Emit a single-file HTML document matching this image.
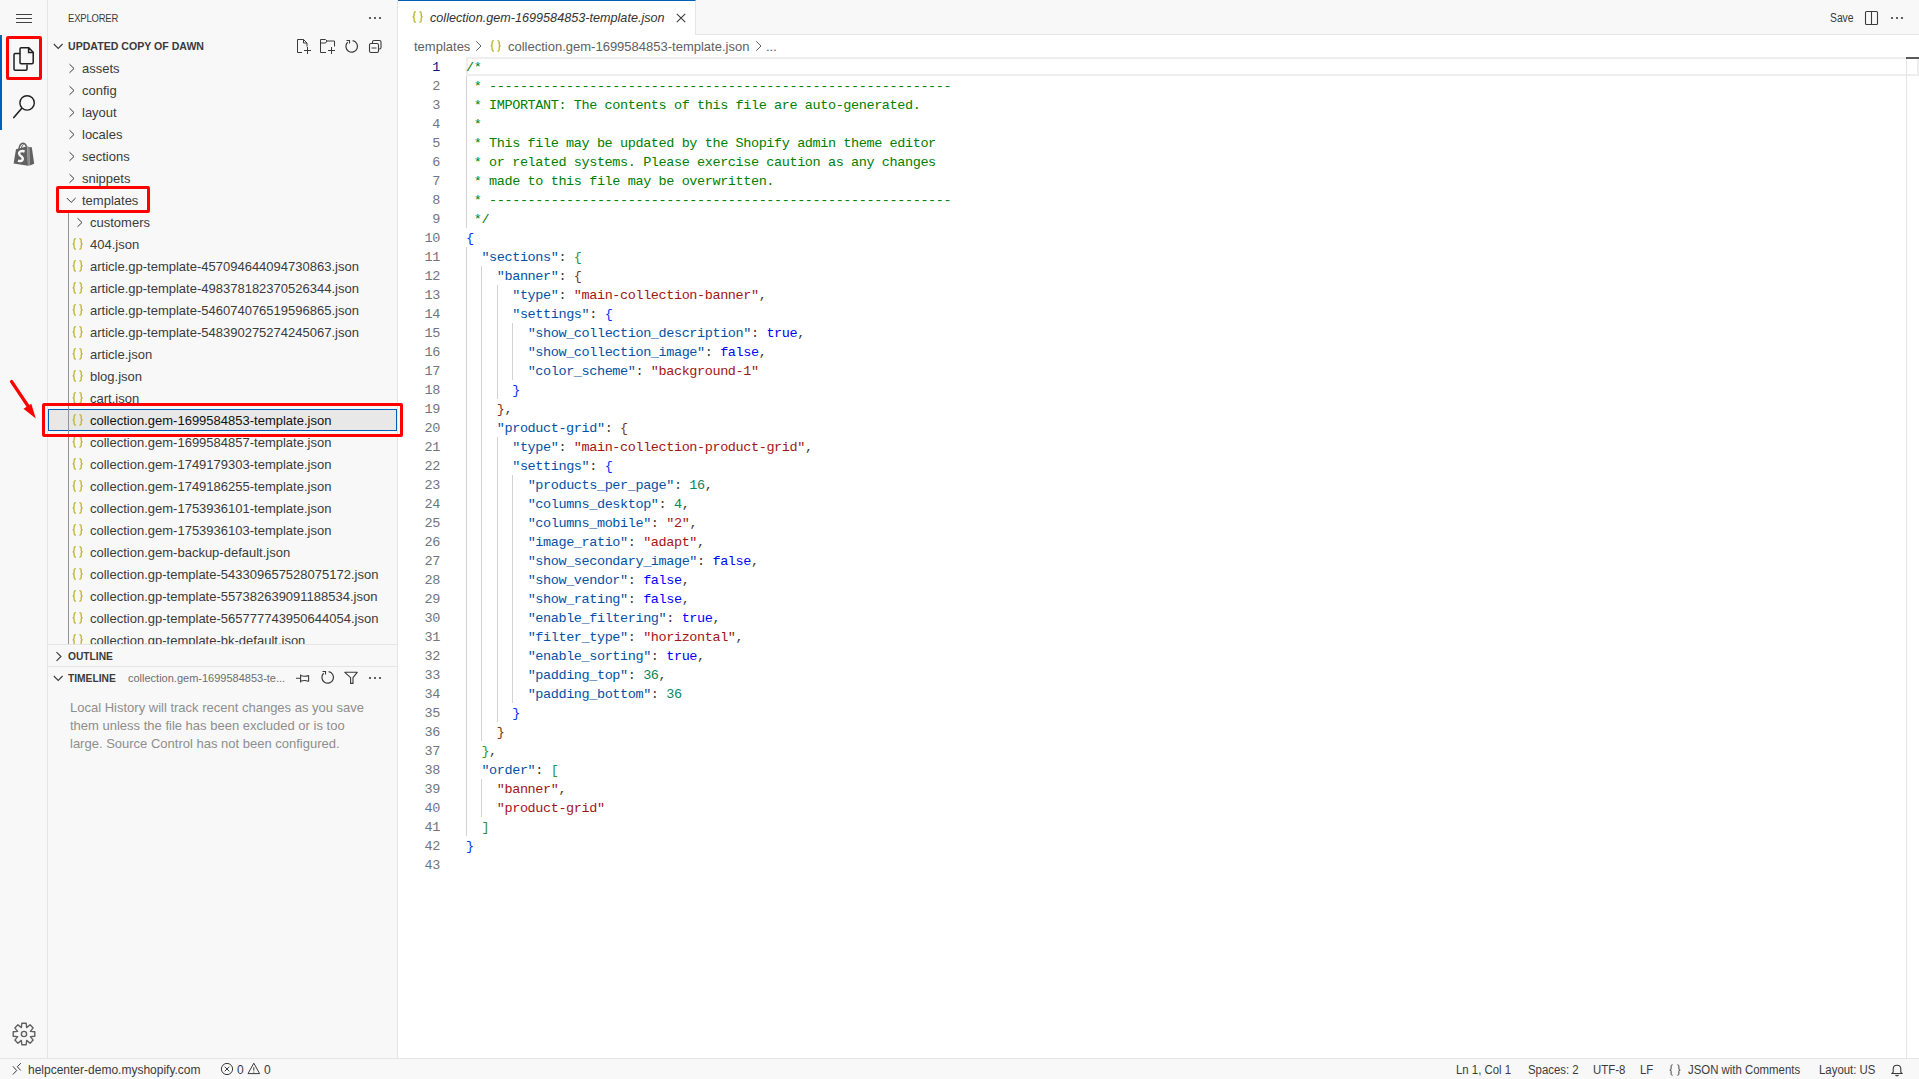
<!DOCTYPE html>
<html><head><meta charset="utf-8">
<style>
*{box-sizing:border-box;margin:0;padding:0}
html,body{width:1919px;height:1079px;overflow:hidden}
body{background:#f8f8f8;font-family:"Liberation Sans",sans-serif;position:relative;color:#3b3b3b;font-size:13px}
.a{position:absolute}
svg{position:absolute;overflow:visible}
#act{left:0;top:0;width:48px;height:1058px;background:#f8f8f8;border-right:1px solid #e5e5e5}
#side{left:48px;top:0;width:350px;height:1058px;background:#f8f8f8;border-right:1px solid #e5e5e5;overflow:hidden}
#editor{left:398px;top:0;width:1521px;height:1058px;background:#fff;overflow:hidden}
#status{left:0;top:1058px;width:1919px;height:21px;border-top:1px solid #e5e5e5;background:#f8f8f8;font-size:12px}
.row{position:absolute;left:0;width:349px;height:22px;line-height:22px;white-space:nowrap;color:#3b3b3b}
.row .t{position:absolute;top:1px}
.hdr{font-weight:bold;font-size:11px}
.code{font-family:"Liberation Mono",monospace;font-size:13.5px;letter-spacing:-0.4px}
.ln{position:absolute;left:0;width:42px;text-align:right;height:19px;line-height:21px}
.cl{position:absolute;left:68px;height:19px;line-height:21px;white-space:pre}
.c{color:#008000}.k{color:#0451a5}.s{color:#a31515}.b{color:#0000ff}.n{color:#098658}
.p0{color:#0431fa}.p1{color:#319331}.p2{color:#7b3814}
.st{position:absolute;top:0;height:21px;line-height:23px;white-space:nowrap}
.sel{background:#e8e8e8;border:1px solid #005fb8}
.sel .t{top:0px;margin-left:-1px;color:#111}.sel svg{margin-top:-1px;margin-left:-1px}
.red{position:absolute;border:3px solid #ff0000;border-radius:2px}
</style></head><body>
<!-- ACTIVITY BAR -->
<div id="act" class="a">
<svg style="left:0;top:0" width="48" height="48"><path d="M16 14.5 H32 M16 18.5 H32 M16 22.5 H32" stroke="#424242" stroke-width="1"/></svg>
<div class="a" style="left:0;top:35px;width:2px;height:95px;background:#005fb8"></div>
<svg style="left:0;top:0" width="48" height="80"><path d="M20.2 53.5 H15.2 Q14 53.5 14 54.7 V69 Q14 70.2 15.2 70.2 H25.8 Q27 70.2 27 69 V64.5" fill="none" stroke="#1f1f1f" stroke-width="1.5"/><path d="M21.2 47.8 H28.8 L33.2 52.2 V62.5 Q33.2 63.7 32 63.7 H21.2 Q20 63.7 20 62.5 V49 Q20 47.8 21.2 47.8 Z M28.6 47.8 V52.4 H33.2" fill="none" stroke="#1f1f1f" stroke-width="1.5"/></svg>
<svg style="left:0;top:0" width="48" height="130"><circle cx="27.1" cy="102.9" r="7.2" fill="none" stroke="#1f1f1f" stroke-width="1.4"/><path d="M21.6 108.6 L13.8 117.6" stroke="#1f1f1f" stroke-width="1.6" stroke-linecap="round"/></svg>
<svg style="left:0;top:0" width="48" height="170"><path d="M18.9 149.2 C19.4 145.5 21 143.3 23 143.2 C24.6 143.2 25.8 144.5 26.6 146.8" fill="none" stroke="#616161" stroke-width="1.5"/><path d="M21.3 148.5 C21.8 146.2 22.6 144.9 23.6 144.6" fill="none" stroke="#616161" stroke-width="1"/><path d="M16 149.3 L27.3 146.3 L28 165.8 L13.6 163.4 Z" fill="#616161"/><path d="M27.3 146.3 L29.2 147 L29.9 165.5 L28 165.8 Z" fill="#8c8c8c"/><path d="M29.2 147 L31.8 147.2 L34.2 163.8 L29.9 165.5 Z" fill="#616161"/><path d="M24.6 151.6 Q22.5 150.6 20.6 151.3 Q18.4 152.4 19.5 154.6 Q20.3 155.8 21.8 156.8 Q23.4 158.2 22.5 160 Q21.2 161.8 18 160.6" fill="none" stroke="#f8f8f8" stroke-width="2.4"/></svg>
<svg style="left:0;top:0" width="48" height="1058"><g transform="translate(24 1034)" fill="none" stroke="#616161" stroke-width="1.4" stroke-linejoin="round"><path d="M-2.19 -10.78 L2.19 -10.78 L2.64 -6.37 L6.07 -9.17 L9.17 -6.07 L6.37 -2.64 L10.78 -2.19 L10.78 2.19 L6.37 2.64 L9.17 6.07 L6.07 9.17 L2.64 6.37 L2.19 10.78 L-2.19 10.78 L-2.64 6.37 L-6.07 9.17 L-9.17 6.07 L-6.37 2.64 L-10.78 2.19 L-10.78 -2.19 L-6.37 -2.64 L-9.17 -6.07 L-6.07 -9.17 L-2.64 -6.37 Z"/><circle cx="0" cy="0" r="2.6"/></g></svg>
</div>
<!-- SIDEBAR -->
<div id="side" class="a">
<svg width="0" height="0" style="position:absolute"><defs>
<g id="json"><path d="M3.9 0.6 Q2.1 0.6 2.1 2.3 V4.5 Q2.1 5.8 0.6 5.8 Q2.1 5.8 2.1 7.1 V9.5 Q2.1 11.2 3.9 11.2 M7.4 0.6 Q9.2 0.6 9.2 2.3 V4.5 Q9.2 5.8 10.7 5.8 Q9.2 5.8 9.2 7.1 V9.5 Q9.2 11.2 7.4 11.2" fill="none" stroke="#bcb92c" stroke-width="1.35"/></g>
</defs></svg>
<div class="a" style="left:20px;top:0;height:35px;line-height:36px;font-size:11px;letter-spacing:-0.2px"><span style="display:inline-block;transform:scaleX(0.86);transform-origin:0 50%">EXPLORER</span></div>
<svg style="left:320px;top:16px" width="14" height="4"><circle cx="2" cy="2" r="1.1" fill="#3b3b3b"/><circle cx="7" cy="2" r="1.1" fill="#3b3b3b"/><circle cx="12" cy="2" r="1.1" fill="#3b3b3b"/></svg>
<!-- section header -->
<div class="a" style="left:0;top:35px;width:349px;height:22px">
<svg style="left:5px;top:8px" width="11" height="7"><path d="M0.8 1 L5.2 5.4 L9.6 1" fill="none" stroke="#3b3b3b" stroke-width="1.1"/></svg>
<div class="a hdr" style="left:20px;top:0;line-height:22px;color:#3b3b3b;white-space:nowrap"><span style="display:inline-block;transform:scaleX(0.962);transform-origin:0 50%">UPDATED COPY OF DAWN</span></div>
<!-- toolbar icons -->
<svg style="left:249px;top:4px" width="16" height="16"><path d="M0.5 13.5 V0.5 H6.5 L10 4 V7.5 M6.5 0.5 V4 H10 M0.5 13.5 H5 M10.5 8 V15 M7 11.5 H14" fill="none" stroke="#3b3b3b" stroke-width="1"/></svg>
<svg style="left:272px;top:4px" width="16" height="16"><path d="M0.5 13.5 V0.5 H5.5 L7 2 H14.5 V7.5 M0.5 4 H5.5 L7 2 M0.5 13.5 H6 M11.5 8 V15 M8 11.5 H15" fill="none" stroke="#3b3b3b" stroke-width="1"/></svg>
<svg style="left:296px;top:4px" width="16" height="16"><path d="M3.6 3.2 A5.8 5.8 0 1 0 8.6 1.6" fill="none" stroke="#3b3b3b" stroke-width="1.2"/><path d="M2.5 1.5 H5.5 V4.5" fill="none" stroke="#3b3b3b" stroke-width="1.1"/></svg>
<svg style="left:320px;top:4px" width="16" height="16"><path d="M4.5 4.5 V3 Q4.5 1.5 6 1.5 H11.5 Q13 1.5 13 3 V8.5 Q13 10 11.5 10 H10.5 M1.5 6 Q1.5 4.5 3 4.5 H9 Q10.5 4.5 10.5 6 V12 Q10.5 13.5 9 13.5 H3 Q1.5 13.5 1.5 12 Z M3.5 9 H8.5" fill="none" stroke="#3b3b3b" stroke-width="1.1"/></svg>
</div>
<!-- tree -->
<div class="a" style="left:0;top:57px;width:349px;height:587px;overflow:hidden">
<div class="row" style="top:0px"><svg class="chev" style="left:20px;top:6px" width="8" height="11"><path d="M1.5 1.2 L6 5.5 L1.5 9.8" fill="none" stroke="#3b3b3b" stroke-width="1"/></svg><span class="t" style="left:34px">assets</span></div>
<div class="row" style="top:22px"><svg class="chev" style="left:20px;top:6px" width="8" height="11"><path d="M1.5 1.2 L6 5.5 L1.5 9.8" fill="none" stroke="#3b3b3b" stroke-width="1"/></svg><span class="t" style="left:34px">config</span></div>
<div class="row" style="top:44px"><svg class="chev" style="left:20px;top:6px" width="8" height="11"><path d="M1.5 1.2 L6 5.5 L1.5 9.8" fill="none" stroke="#3b3b3b" stroke-width="1"/></svg><span class="t" style="left:34px">layout</span></div>
<div class="row" style="top:66px"><svg class="chev" style="left:20px;top:6px" width="8" height="11"><path d="M1.5 1.2 L6 5.5 L1.5 9.8" fill="none" stroke="#3b3b3b" stroke-width="1"/></svg><span class="t" style="left:34px">locales</span></div>
<div class="row" style="top:88px"><svg class="chev" style="left:20px;top:6px" width="8" height="11"><path d="M1.5 1.2 L6 5.5 L1.5 9.8" fill="none" stroke="#3b3b3b" stroke-width="1"/></svg><span class="t" style="left:34px">sections</span></div>
<div class="row" style="top:110px"><svg class="chev" style="left:20px;top:6px" width="8" height="11"><path d="M1.5 1.2 L6 5.5 L1.5 9.8" fill="none" stroke="#3b3b3b" stroke-width="1"/></svg><span class="t" style="left:34px">snippets</span></div>
<div class="row" style="top:132px"><svg class="chev" style="left:18px;top:8px" width="11" height="7"><path d="M0.8 1 L5.2 5.4 L9.6 1" fill="none" stroke="#3b3b3b" stroke-width="1"/></svg><span class="t" style="left:34px">templates</span></div>
<div class="row" style="top:154px"><svg class="chev" style="left:28px;top:6px" width="8" height="11"><path d="M1.5 1.2 L6 5.5 L1.5 9.8" fill="none" stroke="#3b3b3b" stroke-width="1"/></svg><span class="t" style="left:42px">customers</span></div>
<div class="row" style="top:176px"><svg style="left:24px;top:5px" width="12" height="12"><use href="#json"/></svg><span class="t" style="left:42px">404.json</span></div>
<div class="row" style="top:198px"><svg style="left:24px;top:5px" width="12" height="12"><use href="#json"/></svg><span class="t" style="left:42px">article.gp-template-457094644094730863.json</span></div>
<div class="row" style="top:220px"><svg style="left:24px;top:5px" width="12" height="12"><use href="#json"/></svg><span class="t" style="left:42px">article.gp-template-498378182370526344.json</span></div>
<div class="row" style="top:242px"><svg style="left:24px;top:5px" width="12" height="12"><use href="#json"/></svg><span class="t" style="left:42px">article.gp-template-546074076519596865.json</span></div>
<div class="row" style="top:264px"><svg style="left:24px;top:5px" width="12" height="12"><use href="#json"/></svg><span class="t" style="left:42px">article.gp-template-548390275274245067.json</span></div>
<div class="row" style="top:286px"><svg style="left:24px;top:5px" width="12" height="12"><use href="#json"/></svg><span class="t" style="left:42px">article.json</span></div>
<div class="row" style="top:308px"><svg style="left:24px;top:5px" width="12" height="12"><use href="#json"/></svg><span class="t" style="left:42px">blog.json</span></div>
<div class="row" style="top:330px"><svg style="left:24px;top:5px" width="12" height="12"><use href="#json"/></svg><span class="t" style="left:42px">cart.json</span></div>
<div class="row sel" style="top:352px"><svg style="left:24px;top:5px" width="12" height="12"><use href="#json"/></svg><span class="t" style="left:42px">collection.gem-1699584853-template.json</span></div>
<div class="row" style="top:374px"><svg style="left:24px;top:5px" width="12" height="12"><use href="#json"/></svg><span class="t" style="left:42px">collection.gem-1699584857-template.json</span></div>
<div class="row" style="top:396px"><svg style="left:24px;top:5px" width="12" height="12"><use href="#json"/></svg><span class="t" style="left:42px">collection.gem-1749179303-template.json</span></div>
<div class="row" style="top:418px"><svg style="left:24px;top:5px" width="12" height="12"><use href="#json"/></svg><span class="t" style="left:42px">collection.gem-1749186255-template.json</span></div>
<div class="row" style="top:440px"><svg style="left:24px;top:5px" width="12" height="12"><use href="#json"/></svg><span class="t" style="left:42px">collection.gem-1753936101-template.json</span></div>
<div class="row" style="top:462px"><svg style="left:24px;top:5px" width="12" height="12"><use href="#json"/></svg><span class="t" style="left:42px">collection.gem-1753936103-template.json</span></div>
<div class="row" style="top:484px"><svg style="left:24px;top:5px" width="12" height="12"><use href="#json"/></svg><span class="t" style="left:42px">collection.gem-backup-default.json</span></div>
<div class="row" style="top:506px"><svg style="left:24px;top:5px" width="12" height="12"><use href="#json"/></svg><span class="t" style="left:42px">collection.gp-template-543309657528075172.json</span></div>
<div class="row" style="top:528px"><svg style="left:24px;top:5px" width="12" height="12"><use href="#json"/></svg><span class="t" style="left:42px">collection.gp-template-557382639091188534.json</span></div>
<div class="row" style="top:550px"><svg style="left:24px;top:5px" width="12" height="12"><use href="#json"/></svg><span class="t" style="left:42px">collection.gp-template-565777743950644054.json</span></div>
<div class="row" style="top:572px"><svg style="left:24px;top:5px" width="12" height="12"><use href="#json"/></svg><span class="t" style="left:42px">collection.gp-template-bk-default.json</span></div>
<div class="a" style="left:20px;top:154px;width:1px;height:440px;background:#939393"></div>
</div>
<!-- outline / timeline -->
<div class="a" style="left:0;top:644px;width:349px;height:1px;background:#e5e5e5"></div>
<div class="a" style="left:0;top:645px;width:349px;height:21px">
<svg style="left:7px;top:6px" width="8" height="11"><path d="M1.5 1.2 L6 5.5 L1.5 9.8" fill="none" stroke="#3b3b3b" stroke-width="1.1"/></svg>
<div class="a hdr" style="left:20px;top:0;line-height:22px"><span style="display:inline-block;transform:scaleX(0.93);transform-origin:0 50%">OUTLINE</span></div>
</div>
<div class="a" style="left:0;top:666px;width:349px;height:1px;background:#e5e5e5"></div>
<div class="a" style="left:0;top:667px;width:349px;height:22px">
<svg style="left:5px;top:8px" width="11" height="7"><path d="M0.8 1 L5.2 5.4 L9.6 1" fill="none" stroke="#3b3b3b" stroke-width="1.1"/></svg>
<div class="a hdr" style="left:20px;top:0;line-height:22px"><span style="display:inline-block;transform:scaleX(0.93);transform-origin:0 50%">TIMELINE</span></div>
<div class="a" style="left:80px;top:0;line-height:22px;font-size:11px;color:#6e6e6e;white-space:nowrap">collection.gem-1699584853-te...</div>
<svg style="left:247px;top:3px" width="16" height="16"><path d="M1 8.2 H5.6 M5.6 4.4 V12.4 M5.6 5.6 Q9.6 7 13.6 5.4 M5.6 11.2 Q9.6 9.8 13.6 11.4 M13.6 5.2 V11.6" fill="none" stroke="#3b3b3b" stroke-width="1.1"/></svg>
<svg style="left:272px;top:3px" width="16" height="16"><path d="M3.6 3.2 A5.8 5.8 0 1 0 8.6 1.6" fill="none" stroke="#3b3b3b" stroke-width="1.2"/><path d="M2.5 1.5 H5.5 V4.5" fill="none" stroke="#3b3b3b" stroke-width="1.1"/></svg>
<svg style="left:296px;top:3px" width="16" height="16"><path d="M0.8 2.3 H13.2 L9 7.6 V13.4 H6.6 V7.6 Z" fill="none" stroke="#3b3b3b" stroke-width="1.1" stroke-linejoin="round"/></svg>
<svg style="left:320px;top:9px" width="14" height="4"><circle cx="2" cy="2" r="1.1" fill="#3b3b3b"/><circle cx="7" cy="2" r="1.1" fill="#3b3b3b"/><circle cx="12" cy="2" r="1.1" fill="#3b3b3b"/></svg>
</div>
<div class="a" style="left:22px;top:699px;width:300px;line-height:18px;font-size:13px;color:#8e8e8e">Local History will track recent changes as you save them unless the file has been excluded or is too large. Source Control has not been configured.</div>
</div>
<!-- EDITOR -->
<div id="editor" class="a">
<!-- tab bar -->
<div class="a" style="left:0;top:0;width:1521px;height:35px;background:#f8f8f8;border-bottom:1px solid #e5e5e5"></div>
<div class="a" style="left:0;top:0;width:298px;height:35px;background:#fff;border-top:1px solid #005fb8;border-right:1px solid #e5e5e5"></div>
<svg style="left:14px;top:11px" width="12" height="12"><use href="#json"/></svg>
<div class="a" style="left:32px;top:0;height:35px;line-height:35px;font-style:italic;color:#333;white-space:nowrap"><span style="display:inline-block;transform:scaleX(0.972);transform-origin:0 50%">collection.gem-1699584853-template.json</span></div>
<svg style="left:278px;top:13px" width="10" height="10"><path d="M0.8 0.8 L9.2 9.2 M9.2 0.8 L0.8 9.2" fill="none" stroke="#3b3b3b" stroke-width="1.1"/></svg>
<div class="a" style="left:1432px;top:0;height:35px;line-height:36px;font-size:12px;color:#3b3b3b"><span style="display:inline-block;transform:scaleX(0.86);transform-origin:0 50%">Save</span></div>
<svg style="left:1466px;top:10px" width="16" height="16"><rect x="1.5" y="1.5" width="12" height="13" rx="1" fill="none" stroke="#3b3b3b" stroke-width="1.1"/><path d="M7.5 1.5 V14.5" stroke="#3b3b3b" stroke-width="1.1"/></svg>
<svg style="left:1492px;top:16px" width="14" height="4"><circle cx="2" cy="2" r="1.1" fill="#3b3b3b"/><circle cx="7" cy="2" r="1.1" fill="#3b3b3b"/><circle cx="12" cy="2" r="1.1" fill="#3b3b3b"/></svg>
<!-- breadcrumbs -->
<div class="a" style="left:16px;top:36px;height:22px;line-height:22px;color:#616161;white-space:nowrap">templates</div>
<svg style="left:77px;top:40px" width="8" height="12"><path d="M1.2 1.2 L6 6 L1.2 10.8" fill="none" stroke="#616161" stroke-width="1"/></svg>
<svg style="left:92px;top:40px" width="12" height="12"><use href="#json"/></svg>
<div class="a" style="left:110px;top:36px;height:22px;line-height:22px;color:#616161;white-space:nowrap">collection.gem-1699584853-template.json</div>
<svg style="left:357px;top:40px" width="8" height="12"><path d="M1.2 1.2 L6 6 L1.2 10.8" fill="none" stroke="#616161" stroke-width="1"/></svg>
<div class="a" style="left:368px;top:36px;height:22px;line-height:22px;color:#616161">...</div>
<!-- line highlight -->
<div class="a" style="left:68px;top:57px;width:1453px;height:19px;border:2px solid #eeeeee"></div>
<!-- overview ruler -->
<div class="a" style="left:1508px;top:57px;width:1px;height:1001px;background:#e5e5e5"></div>
<div class="a" style="left:1508px;top:57px;width:13px;height:2px;background:#5a5a5a"></div>
<!-- code -->
<div class="a code" style="left:0;top:57px;width:1500px;height:1001px">
<div class="a" style="left:68px;top:19px;width:1px;height:152px;background:#d3d3d3"></div>
<div class="a" style="left:68px;top:190px;width:1px;height:589px;background:#d3d3d3"></div>
<div class="a" style="left:83px;top:209px;width:1px;height:475px;background:#d3d3d3"></div>
<div class="a" style="left:83px;top:722px;width:1px;height:38px;background:#d3d3d3"></div>
<div class="a" style="left:99px;top:228px;width:1px;height:114px;background:#d3d3d3"></div>
<div class="a" style="left:99px;top:380px;width:1px;height:285px;background:#d3d3d3"></div>
<div class="a" style="left:114px;top:266px;width:1px;height:57px;background:#d3d3d3"></div>
<div class="a" style="left:114px;top:418px;width:1px;height:228px;background:#d3d3d3"></div>
<div class="ln" style="top:0px;color:#171184">1</div>
<div class="ln" style="top:19px;color:#6e7681">2</div>
<div class="ln" style="top:38px;color:#6e7681">3</div>
<div class="ln" style="top:57px;color:#6e7681">4</div>
<div class="ln" style="top:76px;color:#6e7681">5</div>
<div class="ln" style="top:95px;color:#6e7681">6</div>
<div class="ln" style="top:114px;color:#6e7681">7</div>
<div class="ln" style="top:133px;color:#6e7681">8</div>
<div class="ln" style="top:152px;color:#6e7681">9</div>
<div class="ln" style="top:171px;color:#6e7681">10</div>
<div class="ln" style="top:190px;color:#6e7681">11</div>
<div class="ln" style="top:209px;color:#6e7681">12</div>
<div class="ln" style="top:228px;color:#6e7681">13</div>
<div class="ln" style="top:247px;color:#6e7681">14</div>
<div class="ln" style="top:266px;color:#6e7681">15</div>
<div class="ln" style="top:285px;color:#6e7681">16</div>
<div class="ln" style="top:304px;color:#6e7681">17</div>
<div class="ln" style="top:323px;color:#6e7681">18</div>
<div class="ln" style="top:342px;color:#6e7681">19</div>
<div class="ln" style="top:361px;color:#6e7681">20</div>
<div class="ln" style="top:380px;color:#6e7681">21</div>
<div class="ln" style="top:399px;color:#6e7681">22</div>
<div class="ln" style="top:418px;color:#6e7681">23</div>
<div class="ln" style="top:437px;color:#6e7681">24</div>
<div class="ln" style="top:456px;color:#6e7681">25</div>
<div class="ln" style="top:475px;color:#6e7681">26</div>
<div class="ln" style="top:494px;color:#6e7681">27</div>
<div class="ln" style="top:513px;color:#6e7681">28</div>
<div class="ln" style="top:532px;color:#6e7681">29</div>
<div class="ln" style="top:551px;color:#6e7681">30</div>
<div class="ln" style="top:570px;color:#6e7681">31</div>
<div class="ln" style="top:589px;color:#6e7681">32</div>
<div class="ln" style="top:608px;color:#6e7681">33</div>
<div class="ln" style="top:627px;color:#6e7681">34</div>
<div class="ln" style="top:646px;color:#6e7681">35</div>
<div class="ln" style="top:665px;color:#6e7681">36</div>
<div class="ln" style="top:684px;color:#6e7681">37</div>
<div class="ln" style="top:703px;color:#6e7681">38</div>
<div class="ln" style="top:722px;color:#6e7681">39</div>
<div class="ln" style="top:741px;color:#6e7681">40</div>
<div class="ln" style="top:760px;color:#6e7681">41</div>
<div class="ln" style="top:779px;color:#6e7681">42</div>
<div class="ln" style="top:798px;color:#6e7681">43</div>
<div class="cl" style="top:0px"><span class="c">/*</span></div>
<div class="cl" style="top:19px"><span class="c"> * ------------------------------------------------------------</span></div>
<div class="cl" style="top:38px"><span class="c"> * IMPORTANT: The contents of this file are auto-generated.</span></div>
<div class="cl" style="top:57px"><span class="c"> *</span></div>
<div class="cl" style="top:76px"><span class="c"> * This file may be updated by the Shopify admin theme editor</span></div>
<div class="cl" style="top:95px"><span class="c"> * or related systems. Please exercise caution as any changes</span></div>
<div class="cl" style="top:114px"><span class="c"> * made to this file may be overwritten.</span></div>
<div class="cl" style="top:133px"><span class="c"> * ------------------------------------------------------------</span></div>
<div class="cl" style="top:152px"><span class="c"> */</span></div>
<div class="cl" style="top:171px"><span class="p0">{</span></div>
<div class="cl" style="top:190px">  <span class="k">&quot;sections&quot;</span>: <span class="p1">{</span></div>
<div class="cl" style="top:209px">    <span class="k">&quot;banner&quot;</span>: <span class="p2">{</span></div>
<div class="cl" style="top:228px">      <span class="k">&quot;type&quot;</span>: <span class="s">&quot;main-collection-banner&quot;</span>,</div>
<div class="cl" style="top:247px">      <span class="k">&quot;settings&quot;</span>: <span class="p0">{</span></div>
<div class="cl" style="top:266px">        <span class="k">&quot;show_collection_description&quot;</span>: <span class="b">true</span>,</div>
<div class="cl" style="top:285px">        <span class="k">&quot;show_collection_image&quot;</span>: <span class="b">false</span>,</div>
<div class="cl" style="top:304px">        <span class="k">&quot;color_scheme&quot;</span>: <span class="s">&quot;background-1&quot;</span></div>
<div class="cl" style="top:323px">      <span class="p0">}</span></div>
<div class="cl" style="top:342px">    <span class="p2">}</span>,</div>
<div class="cl" style="top:361px">    <span class="k">&quot;product-grid&quot;</span>: <span class="p2">{</span></div>
<div class="cl" style="top:380px">      <span class="k">&quot;type&quot;</span>: <span class="s">&quot;main-collection-product-grid&quot;</span>,</div>
<div class="cl" style="top:399px">      <span class="k">&quot;settings&quot;</span>: <span class="p0">{</span></div>
<div class="cl" style="top:418px">        <span class="k">&quot;products_per_page&quot;</span>: <span class="n">16</span>,</div>
<div class="cl" style="top:437px">        <span class="k">&quot;columns_desktop&quot;</span>: <span class="n">4</span>,</div>
<div class="cl" style="top:456px">        <span class="k">&quot;columns_mobile&quot;</span>: <span class="s">&quot;2&quot;</span>,</div>
<div class="cl" style="top:475px">        <span class="k">&quot;image_ratio&quot;</span>: <span class="s">&quot;adapt&quot;</span>,</div>
<div class="cl" style="top:494px">        <span class="k">&quot;show_secondary_image&quot;</span>: <span class="b">false</span>,</div>
<div class="cl" style="top:513px">        <span class="k">&quot;show_vendor&quot;</span>: <span class="b">false</span>,</div>
<div class="cl" style="top:532px">        <span class="k">&quot;show_rating&quot;</span>: <span class="b">false</span>,</div>
<div class="cl" style="top:551px">        <span class="k">&quot;enable_filtering&quot;</span>: <span class="b">true</span>,</div>
<div class="cl" style="top:570px">        <span class="k">&quot;filter_type&quot;</span>: <span class="s">&quot;horizontal&quot;</span>,</div>
<div class="cl" style="top:589px">        <span class="k">&quot;enable_sorting&quot;</span>: <span class="b">true</span>,</div>
<div class="cl" style="top:608px">        <span class="k">&quot;padding_top&quot;</span>: <span class="n">36</span>,</div>
<div class="cl" style="top:627px">        <span class="k">&quot;padding_bottom&quot;</span>: <span class="n">36</span></div>
<div class="cl" style="top:646px">      <span class="p0">}</span></div>
<div class="cl" style="top:665px">    <span class="p2">}</span></div>
<div class="cl" style="top:684px">  <span class="p1">}</span>,</div>
<div class="cl" style="top:703px">  <span class="k">&quot;order&quot;</span>: <span class="p1">[</span></div>
<div class="cl" style="top:722px">    <span class="s">&quot;banner&quot;</span>,</div>
<div class="cl" style="top:741px">    <span class="s">&quot;product-grid&quot;</span></div>
<div class="cl" style="top:760px">  <span class="p1">]</span></div>
<div class="cl" style="top:779px"><span class="p0">}</span></div>
<div class="cl" style="top:798px"></div>
</div>
</div>
<!-- STATUS -->
<div id="status" class="a">
<svg style="left:12px;top:4px" width="11" height="13"><path d="M0.9 3.3 L4.7 7.5 L0.9 11.5 M8.8 0.2 L5.3 3.8 L8.8 7.5" fill="none" stroke="#3b3b3b" stroke-width="1"/></svg>
<div class="st" style="left:28px">helpcenter-demo.myshopify.com</div>
<svg style="left:220px;top:4px" width="14" height="14"><circle cx="7" cy="6" r="5.6" fill="none" stroke="#3b3b3b" stroke-width="1"/><path d="M4.7 3.7 L9.3 8.3 M9.3 3.7 L4.7 8.3" stroke="#3b3b3b" stroke-width="1"/></svg>
<div class="st" style="left:237px">0</div>
<svg style="left:247px;top:3px" width="14" height="14"><path d="M6.8 1.2 L12.6 11.6 H1 Z M6.8 5.2 V8.6 M6.8 9.6 V10.6" fill="none" stroke="#3b3b3b" stroke-width="1" stroke-linejoin="round"/></svg>
<div class="st" style="left:264px">0</div>
<div class="st" style="left:1456px"><span style="display:inline-block;transform:scaleX(0.95);transform-origin:0 50%">Ln 1, Col 1</span></div>
<div class="st" style="left:1528px"><span style="display:inline-block;transform:scaleX(0.95);transform-origin:0 50%">Spaces: 2</span></div>
<div class="st" style="left:1593px"><span style="display:inline-block;transform:scaleX(0.95);transform-origin:0 50%">UTF-8</span></div>
<div class="st" style="left:1640px"><span style="display:inline-block;transform:scaleX(0.95);transform-origin:0 50%">LF</span></div>
<svg style="left:1669px;top:5px" width="12" height="12"><path d="M3.6 0.8 C2.3 0.8 2.1 1.4 2.1 2.6 V4.6 C2.1 5.6 1.6 6 0.8 6 C1.6 6 2.1 6.4 2.1 7.4 V9.4 C2.1 10.6 2.3 11.2 3.6 11.2 M8.4 0.8 C9.7 0.8 9.9 1.4 9.9 2.6 V4.6 C9.9 5.6 10.4 6 11.2 6 C10.4 6 9.9 6.4 9.9 7.4 V9.4 C9.9 10.6 9.7 11.2 8.4 11.2" fill="none" stroke="#3b3b3b" stroke-width="1"/></svg>
<div class="st" style="left:1688px"><span style="display:inline-block;transform:scaleX(0.95);transform-origin:0 50%">JSON with Comments</span></div>
<div class="st" style="left:1819px"><span style="display:inline-block;transform:scaleX(0.95);transform-origin:0 50%">Layout: US</span></div>
<svg style="left:1890px;top:4px" width="14" height="14"><path d="M2 10.5 H12 L10.8 9 V6 Q10.8 2.2 7 2.2 Q3.2 2.2 3.2 6 V9 Z M5.5 12 Q7 13.5 8.5 12" fill="none" stroke="#3b3b3b" stroke-width="1.1"/></svg>
</div>
<!-- ANNOTATIONS -->
<div class="red" style="left:6px;top:36px;width:36px;height:44px"></div>
<div class="red" style="left:56px;top:186px;width:94px;height:27px"></div>
<div class="red" style="left:42px;top:403px;width:361px;height:34px"></div>
<svg style="left:0;top:0" width="48" height="430"><path d="M11.5 381.5 L28 406" stroke="#ff0000" stroke-width="3.2" stroke-linecap="round"/><path d="M23.5 408.8 L31.3 403.8 L35.8 418.5 Z" fill="#ff0000"/></svg>
</body></html>
